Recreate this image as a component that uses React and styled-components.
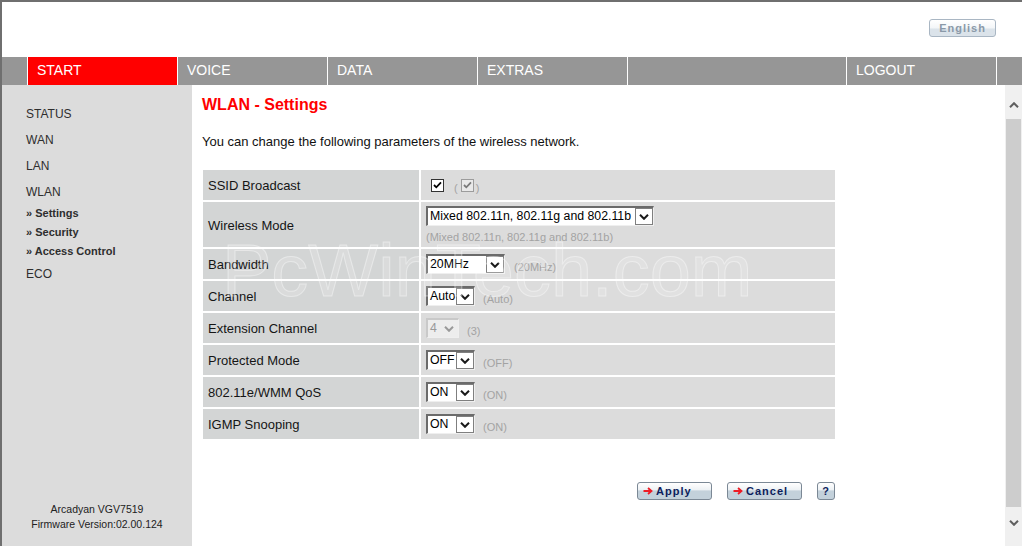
import React from "react";
import styled, { createGlobalStyle } from "styled-components";

const GlobalStyle = createGlobalStyle`
  html, body { margin: 0; padding: 0; background: #fff; }
  body { font-family: "Liberation Sans", Arial, sans-serif; overflow: hidden; }
`;

const navItems = [
  { label: "START", w: 150, active: true },
  { label: "VOICE", w: 150 },
  { label: "DATA", w: 150 },
  { label: "EXTRAS", w: 150 },
  { label: "", w: 219 },
  { label: "LOGOUT", w: 150 },
];

const menu = [
  { label: "STATUS" },
  { label: "WAN" },
  { label: "LAN" },
  { label: "WLAN" },
  { label: "Settings", sub: true },
  { label: "Security", sub: true },
  { label: "Access Control", sub: true },
  { label: "ECO" },
];

function Chevron({ up, color = "#111", w = 10, h = 6, sw = 2 }) {
  return (
    <svg width={w} height={h} viewBox="0 0 10 6">
      <path
        d={up ? "M1 5.2 L5 1.2 L9 5.2" : "M1 0.8 L5 4.8 L9 0.8"}
        fill="none"
        stroke={color}
        strokeWidth={sw}
      />
    </svg>
  );
}

function Select({ value, w, disabled }) {
  return (
    <SelectBox w={w} disabled={disabled}>
      <SelectText disabled={disabled}>{value}</SelectText>
      <SelectArrow disabled={disabled}>
        <Chevron color={disabled ? "#9a9a9a" : "#1a1a1a"} />
      </SelectArrow>
    </SelectBox>
  );
}

function Check({ disabled }) {
  return (
    <CheckBox disabled={disabled}>
      <svg width="9" height="8" viewBox="0 0 9 8">
        <path
          d="M1 4 L3.3 6.3 L8 1.3"
          fill="none"
          stroke={disabled ? "#7a7a7a" : "#000"}
          strokeWidth="1.8"
        />
      </svg>
    </CheckBox>
  );
}

function RedArrow() {
  return (
    <svg width="10" height="8" viewBox="0 0 10 8">
      <path d="M0.5 4 H8 M5 1 L8.5 4 L5 7" fill="none" stroke="#ee1c25" strokeWidth="1.8" />
    </svg>
  );
}

function App() {
  return (
    <>
      <GlobalStyle />
      <Page>
        <Header>
          <LangButton>English</LangButton>
        </Header>

        <Nav>
          <NavSpacer />
          {navItems.map((n, i) => (
            <NavItem key={i} w={n.w} active={n.active}>
              {n.label}
            </NavItem>
          ))}
          <NavRest />
        </Nav>

        <Main>
          <Sidebar>
            {menu.map((m) =>
              m.sub ? (
                <SubItem key={m.label}>» {m.label}</SubItem>
              ) : (
                <MenuItem key={m.label}>{m.label}</MenuItem>
              )
            )}
            <Device>
              <div>Arcadyan VGV7519</div>
              <div>Firmware Version:02.00.124</div>
            </Device>
          </Sidebar>

          <Content>
            <Title>WLAN - Settings</Title>
            <Intro>You can change the following parameters of the wireless network.</Intro>

            <Grid>
              <Label>SSID Broadcast</Label>
              <Value>
                <Check />
                <Hint gap={10} after={3}>(</Hint>
                <Check disabled />
                <Hint gap={2}>)</Hint>
              </Value>

              <Label h={45}>Wireless Mode</Label>
              <Value h={45} column>
                <Select value="Mixed 802.11n, 802.11g and 802.11b" w={228} />
                <SubHint>(Mixed 802.11n, 802.11g and 802.11b)</SubHint>
              </Value>

              <Label>Bandwidth</Label>
              <Value>
                <Select value="20MHz" w={79} />
                <Hint gap={9}>(20MHz)</Hint>
              </Value>

              <Label>Channel</Label>
              <Value>
                <Select value="Auto" w={49} />
                <Hint>(Auto)</Hint>
              </Value>

              <Label>Extension Channel</Label>
              <Value>
                <Select value="4" w={33} disabled />
                <Hint>(3)</Hint>
              </Value>

              <Label>Protected Mode</Label>
              <Value>
                <Select value="OFF" w={49} />
                <Hint>(OFF)</Hint>
              </Value>

              <Label>802.11e/WMM QoS</Label>
              <Value>
                <Select value="ON" w={49} />
                <Hint>(ON)</Hint>
              </Value>

              <Label>IGMP Snooping</Label>
              <Value>
                <Select value="ON" w={49} />
                <Hint>(ON)</Hint>
              </Value>
            </Grid>

            <Actions>
              <ActionButton w={75}>
                <RedArrow />
                Apply
              </ActionButton>
              <ActionButton w={75}>
                <RedArrow />
                Cancel
              </ActionButton>
              <ActionButton w={18} center>
                ?
              </ActionButton>
            </Actions>

            <Watermark>PcWinTech.com</Watermark>
          </Content>

          <Scrollbar>
            <ScrollArrow top>
              <Chevron up color="#5f5f5f" w={10} h={6} />
            </ScrollArrow>
            <Thumb />
            <ScrollArrow>
              <Chevron color="#5f5f5f" w={10} h={6} />
            </ScrollArrow>
          </Scrollbar>
        </Main>
      </Page>
    </>
  );
}

export default App;

const Page = styled.div`
  width: 1022px;
  height: 546px;
  box-sizing: border-box;
  border-top: 2px solid #6f6f6f;
  border-left: 2px solid #6f6f6f;
  display: flex;
  flex-direction: column;
  overflow: hidden;
`;

const Header = styled.div`
  height: 55px;
  box-sizing: border-box;
  display: flex;
  justify-content: flex-end;
  align-items: flex-start;
  padding: 17px 26px 0 0;
`;

const LangButton = styled.button`
  width: 67px;
  height: 18px;
  padding: 0;
  border: 1px solid #a9b6c3;
  border-radius: 3px;
  background: linear-gradient(#ffffff 0%, #f3f6f8 50%, #dbe3ea 56%, #dbe3ea 100%);
  color: #8a99a8;
  font-family: "Liberation Sans", Arial, sans-serif;
  font-weight: bold;
  font-size: 11px;
  letter-spacing: 1px;
  line-height: 16px;
`;

const Nav = styled.div`
  height: 28px;
  background: #969696;
  display: flex;
`;

const NavSpacer = styled.div`
  width: 25px;
`;

const NavItem = styled.div`
  width: ${(p) => p.w}px;
  box-sizing: border-box;
  border-left: 1px solid #fff;
  padding-left: 9px;
  background: ${(p) => (p.active ? "#ff0000" : "transparent")};
  color: #fff;
  font-size: 14px;
  line-height: 26px;
`;

const NavRest = styled.div`
  flex: 1;
  border-left: 1px solid #fff;
`;

const Main = styled.div`
  flex: 1;
  display: flex;
  min-height: 0;
`;

const Sidebar = styled.div`
  width: 190px;
  background: #dcdcdc;
  display: flex;
  flex-direction: column;
  padding-top: 16px;
  box-sizing: border-box;
`;

const MenuItem = styled.div`
  padding-left: 24px;
  font-size: 12px;
  line-height: 26px;
  color: #2e2e2e;
`;

const SubItem = styled.div`
  padding-left: 24px;
  font-size: 11px;
  font-weight: bold;
  line-height: 19px;
  color: #2e2e2e;
  &:nth-child(5) { margin-top: -1px; }
`;

const Device = styled.div`
  margin-top: auto;
  padding-bottom: 14px;
  text-align: center;
  font-size: 10.5px;
  line-height: 15px;
  color: #222;
`;

const Content = styled.div`
  width: 813px;
  position: relative;
  box-sizing: border-box;
  padding: 10px 0 0 10px;
`;

const Title = styled.div`
  font-size: 16px;
  font-weight: bold;
  color: #ff0000;
  line-height: 20px;
`;

const Intro = styled.div`
  margin-top: 19px;
  font-size: 13px;
  line-height: 16px;
  color: #111;
`;

const Grid = styled.div`
  margin: 20px 0 0 1px;
  width: 632px;
  display: grid;
  grid-template-columns: 216px 414px;
  gap: 2px;
  background: #fff;
`;

const Label = styled.div`
  height: ${(p) => p.h || 30}px;
  box-sizing: border-box;
  background: #d3d5d5;
  display: flex;
  align-items: center;
  padding: 1px 0 0 5px;
  font-size: 13px;
  color: #151515;
`;

const Value = styled.div`
  height: ${(p) => p.h || 30}px;
  box-sizing: border-box;
  background: #dcdcdc;
  display: flex;
  flex-direction: ${(p) => (p.column ? "column" : "row")};
  align-items: ${(p) => (p.column ? "flex-start" : "center")};
  padding: ${(p) => (p.column ? "4px 0 0 5px" : "0 0 0 5px")};
`;

const SelectBox = styled.div`
  display: inline-flex;
  width: ${(p) => p.w}px;
  height: 20px;
  box-sizing: border-box;
  border-top: 2px solid ${(p) => (p.disabled ? "#c9c9c9" : "#6b6b6b")};
  border-left: 2px solid ${(p) => (p.disabled ? "#c9c9c9" : "#6b6b6b")};
  border-right: 1px solid #efefef;
  border-bottom: 1px solid #efefef;
  background: ${(p) => (p.disabled ? "#ededed" : "#fff")};
`;

const SelectText = styled.span`
  flex: 1;
  padding-left: 2px;
  font-size: 12.3px;
  line-height: 17px;
  white-space: nowrap;
  overflow: hidden;
  color: ${(p) => (p.disabled ? "#9a9a9a" : "#000")};
`;

const SelectArrow = styled.span`
  width: 18px;
  box-sizing: border-box;
  border: 1px solid ${(p) => (p.disabled ? "transparent" : "#7f7f7f")};
  background: ${(p) => (p.disabled ? "transparent" : "#fff")};
  display: flex;
  align-items: center;
  justify-content: center;
`;

const Hint = styled.span`
  margin-left: ${(p) => (p.gap == null ? 8 : p.gap)}px;
  margin-right: ${(p) => p.after || 0}px;
  padding-top: 5px;
  font-size: 11px;
  color: #a3a3a3;
`;

const SubHint = styled.span`
  margin-top: 5px;
  font-size: 11px;
  line-height: 12px;
  color: #a3a3a3;
`;

const CheckBox = styled.span`
  width: 13px;
  height: 13px;
  margin-left: ${(p) => (p.disabled ? 0 : 5)}px;
  box-sizing: border-box;
  border: 1px solid ${(p) => (p.disabled ? "#9c9c9c" : "#333")};
  background: ${(p) => (p.disabled ? "#e9e9e9" : "#fff")};
  display: inline-flex;
  align-items: center;
  justify-content: center;
`;

const Actions = styled.div`
  width: 632px;
  margin: 43px 0 0 1px;
  display: flex;
  justify-content: flex-end;
  gap: 15px;
`;

const ActionButton = styled.button`
  width: ${(p) => p.w}px;
  height: 18px;
  padding: 0 0 0 ${(p) => (p.center ? 0 : 5)}px;
  box-sizing: border-box;
  border: 1px solid #7b8895;
  border-radius: 3px;
  background: linear-gradient(#ffffff 0%, #eef2f5 42%, #c3d1db 50%, #c3d1db 100%);
  display: flex;
  align-items: center;
  justify-content: ${(p) => (p.center ? "center" : "flex-start")};
  gap: 3px;
  color: #0c1d5c;
  font-family: "Liberation Sans", Arial, sans-serif;
  font-weight: bold;
  font-size: 11px;
  letter-spacing: 1px;
`;

const Watermark = styled.div`
  position: absolute;
  left: 30px;
  top: 149px;
  font-size: 74px;
  line-height: 74px;
  color: rgba(255, 255, 255, 0.16);
  -webkit-text-stroke: 1px rgba(255, 255, 255, 0.4);
  pointer-events: none;
  white-space: nowrap;
`;

const Scrollbar = styled.div`
  width: 17px;
  background: #f0f0f0;
  display: flex;
  flex-direction: column;
`;

const ScrollArrow = styled.div`
  height: ${(p) => (p.top ? 34 : 39)}px;
  display: flex;
  justify-content: center;
  align-items: flex-start;
  padding-top: ${(p) => (p.top ? 17 : 13)}px;
  box-sizing: border-box;
`;

const Thumb = styled.div`
  flex: 1;
  margin: 0 1px;
  background: #cdcdcd;
`;
